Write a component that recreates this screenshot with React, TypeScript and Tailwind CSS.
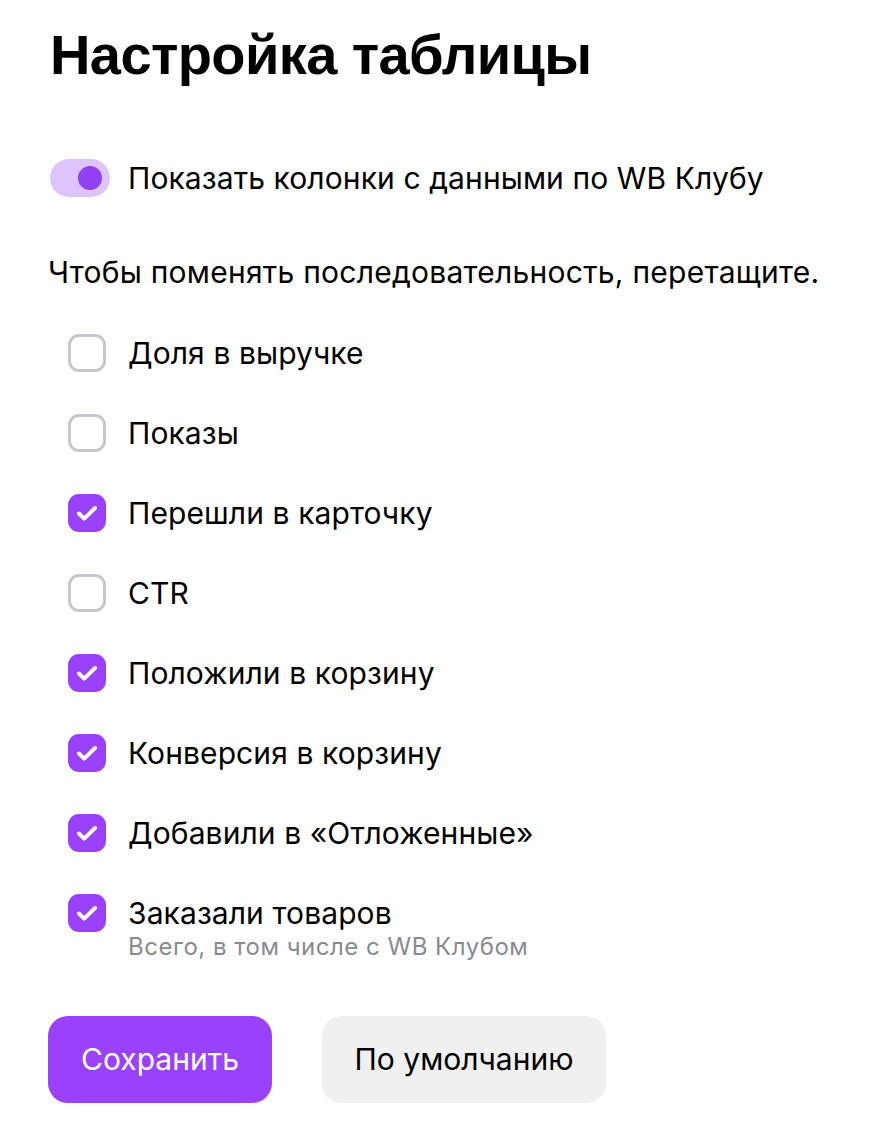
import React from 'react';

const columns = [
  { label: 'Доля в выручке', checked: false },
  { label: 'Показы', checked: false },
  { label: 'Перешли в карточку', checked: true },
  { label: 'CTR', checked: false },
  { label: 'Положили в корзину', checked: true },
  { label: 'Конверсия в корзину', checked: true },
  { label: 'Добавили в «Отложенные»', checked: true },
  { label: 'Заказали товаров', checked: true, hint: 'Всего, в том числе с WB Клубом' },
];

function Checkbox({ checked }: { checked: boolean }) {
  if (checked) {
    return (
      <span className="flex h-[38px] w-[38px] shrink-0 items-center justify-center rounded-[11px] bg-[#9a41fb]">
        <svg className="h-[38px] w-[38px]" viewBox="0 0 38 38" fill="none">
          <path d="M11 19.5l5.2 5.2L27 14" stroke="white" strokeWidth="4" strokeLinecap="round" strokeLinejoin="round" />
        </svg>
      </span>
    );
  }
  return <span className="h-[38px] w-[38px] shrink-0 rounded-[11px] border-[3px] border-[#c6c6cd] bg-white" />;
}

export default function App() {
  return (
    <div className="min-h-screen bg-white pl-[50px] pt-[23px] text-black font-['Inter','Liberation_Sans',sans-serif]">
      <h1 className="font-['Liberation_Sans',Arial,sans-serif] text-[56px] font-bold leading-[64px] tracking-[-0.6px]">
        Настройка таблицы
      </h1>

      <div className="mt-[72px] flex items-center gap-[18px]">
        <span className="flex h-[38px] w-[60px] items-center justify-end rounded-full bg-[#ddc4fc] pr-[8px]">
          <span className="h-[24px] w-[24px] rounded-full bg-[#9140f3]" />
        </span>
        <span className="text-[30px] leading-[38px] tracking-[0.1px]">Показать колонки с данными по WB Клубу</span>
      </div>

      <p className="-ml-[2px] mt-[56px] text-[30px] leading-[38px] tracking-[0.25px]">
        Чтобы поменять последовательность, перетащите.
      </p>

      <ul className="mt-[43px] flex flex-col gap-[42px] pl-[18px]">
        {columns.map((c) => (
          <li key={c.label} className="flex items-start gap-[22px]">
            <Checkbox checked={c.checked} />
            <div className="flex flex-col">
              <span className="text-[30px] leading-[38px] tracking-[0.1px]">{c.label}</span>
              {c.hint && <span className="text-[24px] leading-[30px] tracking-[0.5px] text-[#8a8a93]">{c.hint}</span>}
            </div>
          </li>
        ))}
      </ul>

      <div className="-ml-[2px] mt-[54px] flex gap-[50px]">
        <button className="h-[87px] w-[224px] rounded-[20px] bg-[#9a41fb] text-[30px] text-white">Сохранить</button>
        <button className="h-[87px] w-[284px] rounded-[20px] bg-[#f0f0f0] text-[30px] text-black">По умолчанию</button>
      </div>
    </div>
  );
}
